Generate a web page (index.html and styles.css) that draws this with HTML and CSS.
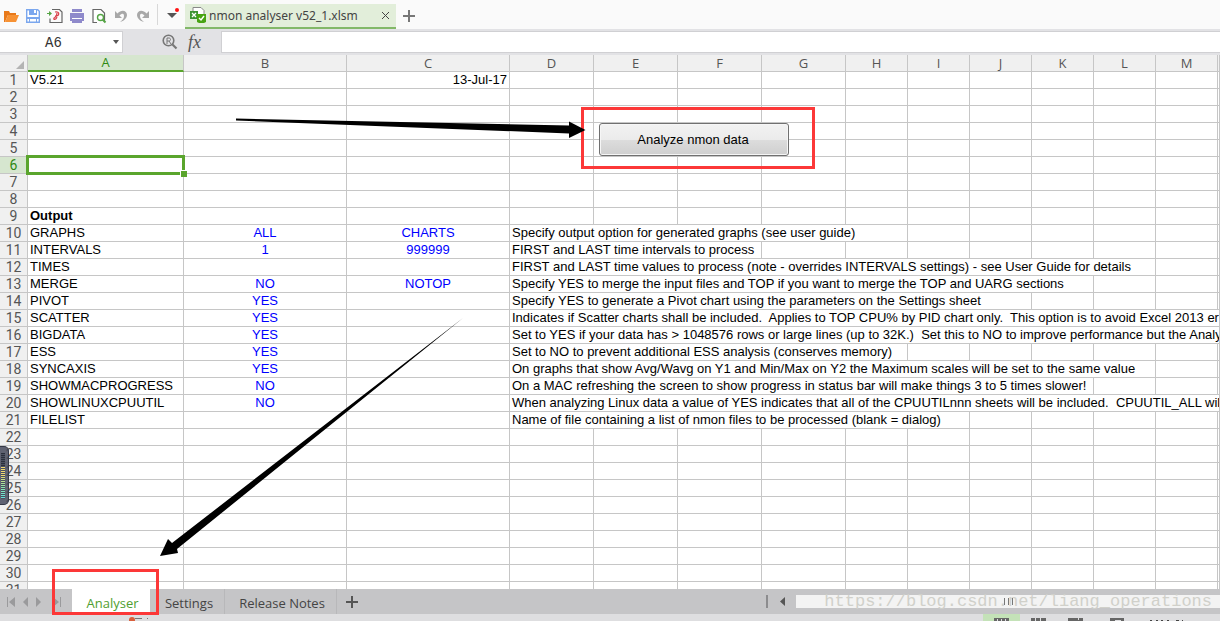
FILE: index.html
```
<!DOCTYPE html>
<html lang="en">
<head>
<meta charset="utf-8">
<title>nmon analyser v52_1.xlsm</title>
<link rel="stylesheet" href="styles.css">
</head>
<body>
<div class="app">
  <header class="toolbar">
    <div class="tools">
      <button class="tool" aria-label="Open"><svg width="16" height="16" viewBox="0 0 16 16"><path d="M1 14V3h5l1 2h6v2H5L2 14z" fill="#e8791a"/><path d="M5 7h11l-3 7H2z" fill="#f79234"/></svg></button>
      <button class="tool" aria-label="Save"><svg width="16" height="16" viewBox="0 0 16 16"><path d="M1.700 1.700h11l1.600 1.600v11H1.700z" fill="#fff" stroke="#7ba7ee" stroke-width="1.400"/><path d="M4 1h8v6H4zM2 9h12v2H2zM4 10h1v4H4zM11 10h1v4h-1z" fill="#7ba7ee"/><path d="M9 2h2v3H9z" fill="#fff"/></svg></button>
      <button class="tool" aria-label="Export to PDF"><svg width="16" height="16" viewBox="0 0 16 16"><path d="M5 1.500h7.500l2.500 2.500v10.500H3v-4" fill="none" stroke="#666" stroke-width="1.200"/><path d="M0 5h2V3l3 2.500L2 8V6H0z" fill="#55a545"/><path d="M8 4c5-1 5 4 0 4M10 5c0 4-2 4-3 5-1 2 2 2 3-1" fill="none" stroke="#d9404a" stroke-width="1.200"/></svg></button>
      <button class="tool" aria-label="Print"><svg width="16" height="16" viewBox="0 0 16 16"><path d="M3 1h10v3H3zM1 5h14v8H1zM3 12h10v3H3z" fill="#8f8acb"/><path d="M3 10h10v1H3z" fill="#fff"/></svg></button>
      <button class="tool" aria-label="Print preview"><svg width="16" height="16" viewBox="0 0 16 16"><path d="M6 14.500H2v-13h8l3.500 3.500V14" fill="#fff" stroke="#666" stroke-width="1.200"/><circle cx="9.500" cy="9.500" r="3" fill="#fff" stroke="#55a545" stroke-width="1.400"/><path d="m11.500 11.500 3 3" stroke="#55a545" stroke-width="2"/></svg></button>
      <button class="tool" aria-label="Undo"><svg width="16" height="16" viewBox="0 0 16 16"><path d="M2 3v7h7L6.500 7.500C9 5 11 5 11 8c0 3-2 4-4 6 4-1 7-4 7-7 0-5-6-6-9.500-1.500z" fill="#a8a8a8"/></svg></button>
      <button class="tool" aria-label="Redo"><svg width="16" height="16" viewBox="0 0 16 16"><path d="M14 3v7H7l2.500-2.500C7 5 5 5 5 8c0 3 2 4 4 6-4-1-7-4-7-7 0-5 6-6 9.500-1.500z" fill="#a8a8a8"/></svg></button>
    </div>
    <button class="more" aria-label="More commands"><svg width="14" height="16" viewBox="0 0 14 16"><path d="M1 6h10l-5 5z" fill="#555"/><circle cx="11" cy="3" r="2" fill="#f11"/></svg></button>
    <div class="doc-tab">
      <svg width="16" height="17" viewBox="0 0 16 17"><path d="M3 .5h8l3 3v8H3z" fill="#fff" stroke="#888"/><path d="M0 4h8v8H0z" fill="#3d9433"/><path d="m2 6 4 4m0-4-4 4" stroke="#fff" stroke-width="1.300"/><path d="M7 7h9v8l-2 1H9l-2-1z" fill="#47a412"/><path d="m9 11 2 2 3-4" fill="none" stroke="#fff" stroke-width="1.400"/></svg>
      <span class="doc-name">nmon analyser v52_1.xlsm</span>
      <button class="close" aria-label="Close"><svg width="9" height="9" viewBox="0 0 9 9"><path d="m1 1 7 7m0-7-7 7" stroke="#444"/></svg></button>
    </div>
    <button class="new-doc" aria-label="New document"><svg width="12" height="12" viewBox="0 0 12 12"><path d="M0 6h12M6 0v12" stroke="#777" stroke-width="2"/></svg></button>
  </header>

  <div class="formula-bar">
    <div class="name-box"><input class="cell-name" aria-label="Cell name" value="A6"><svg width="6" height="4" viewBox="0 0 6 4"><path d="M0 0h6L3 4z" fill="#555"/></svg></div>
    <div class="formula-tools">
      <svg width="16" height="16" viewBox="0 0 16 16"><circle cx="6.500" cy="6.500" r="5.300" fill="none" stroke="#777" stroke-width="1.600"/><path d="m10.500 10.500 4 4" stroke="#777" stroke-width="2.200"/><path d="M5 10V4h2c2 0 2 3 0 3H5m2 0 2 3" fill="none" stroke="#777"/></svg>
      <span class="fx">fx</span>
    </div>
    <input class="formula" aria-label="Formula">
  </div>

  <main class="sheet">
    <table class="grid">
      <colgroup><col class="c-num"><col class="c-a"><col class="c-b"><col class="c-b"><col class="c-d"><col class="c-d"><col class="c-d"><col class="c-d"><col class="c-h"><col class="c-h"><col class="c-h"><col class="c-h"><col class="c-h"><col class="c-h"><col></colgroup>
      <thead><tr><th class="corner"><svg width="10" height="10" viewBox="0 0 10 10"><path d="M9 1v8H1z" fill="#b4b4b4"/></svg></th><th class="active">A</th><th>B</th><th>C</th><th>D</th><th>E</th><th>F</th><th>G</th><th>H</th><th>I</th><th>J</th><th>K</th><th>L</th><th>M</th><th></th></tr></thead>
      <tbody id="rows"></tbody>
    </table>
    <div class="selection"></div>
    <button class="analyze">Analyze nmon data</button>
    <div class="frame frame-button"></div>
  </main>

  <footer class="tabs">
    <div class="nav">
      <button aria-label="First sheet"><svg width="8" height="10" viewBox="0 0 8 10"><path d="M0 0h1v10H0zM8 0v10L2 5z" fill="#9a9a9c"/></svg></button>
      <button aria-label="Previous sheet"><svg width="5" height="10" viewBox="0 0 5 10"><path d="M5 0v10L0 5z" fill="#9a9a9c"/></svg></button>
      <button aria-label="Next sheet"><svg width="5" height="10" viewBox="0 0 5 10"><path d="M0 0v10l5-5z" fill="#9a9a9c"/></svg></button>
      <button class="last" aria-label="Last sheet"><svg width="8" height="10" viewBox="0 0 8 10"><path d="M7 0h1v10H7zM0 0v10l6-5z" fill="#9a9a9c"/></svg></button>
    </div>
    <button class="tab current">Analyser</button>
    <button class="tab settings">Settings</button>
    <button class="tab notes">Release Notes</button>
    <button class="add" aria-label="Add sheet"><svg width="12" height="12" viewBox="0 0 12 12"><path d="M0 6h12M6 0v12" stroke="#555" stroke-width="2"/></svg></button>
    <div class="scroll">
      <span class="grip"></span>
      <svg width="5" height="9" viewBox="0 0 5 9"><path d="M5 0v9L0 4.500z" fill="#555"/></svg>
      <div class="track"><span class="watermark">https://blog.csdn.net/liang_operations</span><span class="thumb"></span></div>
    </div>
  </footer>
  <div class="status">
    <svg width="24" height="7" viewBox="0 0 24 7"><circle cx="5" cy="6" r="3" fill="#d9603c"/><path d="M8 4h7v1H8zM20 4h1v1h-1z" fill="#777"/></svg>
    <svg width="237" height="7" viewBox="0 0 237 7"><path d="M0 0h37v7H0z" fill="#c4e2b8"/><path d="M11 4h15v3H11zM48 4h4v3h-4zM53 4h4v3h-4zM58 4h5v3h-5zM85 4h15v3H85zM127 4h14v3h-14z" fill="#666"/><path d="M14 5h1v2h-1zM18 5h1v2h-1zM22 5h1v2h-1zM95 4h1v2h-1zM132 6h6v1h-6z" fill="#dedee0"/><path d="M167 6h2v1h-2zM173 6h2v1h-2zM178 6h2v1h-2zM184 6h2v1h-2zM193 6h3v1h-3zM199 6h1v1h-1z" fill="#444"/></svg>
  </div>

  <svg class="annotations" width="600" height="570" viewBox="0 0 600 570" aria-hidden="true">
    <path d="M236 118.500 569 125.500V121.500L585.500 130 569 138V133.500L236 120.500z"/>
    <path d="M463 318 177 549 178 553 160 556 168 539 172 543z"/>
  </svg>
  <div class="frame frame-tab"></div>
  <div class="widget"><span class="meter"></span></div>
</div>
<script src="grid.js"></script>
</body>
</html>
```
FILE: grid.js
```
const data = {
  1: ["V5.21", "", "13-Jul-17"],
  9: ["Output"],
  10: ["GRAPHS", "ALL", "CHARTS", "Specify output option for generated graphs (see user guide)", 5],
  11: ["INTERVALS", "1", "999999", "FIRST and LAST time intervals to process", 3],
  12: ["TIMES", "", "", "FIRST and LAST time values to process (note - overrides INTERVALS settings) - see User Guide for details", 9],
  13: ["MERGE", "NO", "NOTOP", "Specify YES to merge the input files and TOP if you want to merge the TOP and UARG sections", 8],
  14: ["PIVOT", "YES", "", "Specify YES to generate a Pivot chart using the parameters on the Settings sheet", 7],
  15: ["SCATTER", "YES", "", "Indicates if Scatter charts shall be included.  Applies to TOP CPU% by PID chart only.  This option is to avoid Excel 2013 errors", 11],
  16: ["BIGDATA", "YES", "", "Set to YES if your data has > 1048576 rows or large lines (up to 32K.)  Set this to NO to improve performance but the Analyser", 11],
  17: ["ESS", "YES", "", "Set to NO to prevent additional ESS analysis (conserves memory)", 5],
  18: ["SYNCAXIS", "YES", "", "On graphs that show Avg/Wavg on Y1 and Min/Max on Y2 the Maximum scales will be set to the same value", 9],
  19: ["SHOWMACPROGRESS", "NO", "", "On a MAC refreshing the screen to show progress in status bar will make things 3 to 5 times slower!", 8],
  20: ["SHOWLINUXCPUUTIL", "NO", "", "When analyzing Linux data a value of YES indicates that all of the CPUUTILnnn sheets will be included.  CPUUTIL_ALL will", 11],
  21: ["FILELIST", "", "", "Name of file containing a list of nmon files to be processed (blank = dialog)", 6]
};
const body = document.getElementById("rows");
for (let n = 1; n <= 31; n++) {
  const tr = body.insertRow();
  const head = document.createElement("th");
  head.textContent = n;
  if (n === 6) head.className = "active";
  tr.append(head);
  const [a = "", b = "", c = "", d = "", span = 1] = data[n] || [];
  [a, b, c, d].forEach((text, i) => {
    const td = tr.insertCell();
    td.textContent = text;
    if (i === 0 && n === 9) td.className = "bold";
    if (i === 1 || i === 2) td.className = n === 1 ? "date" : "value";
    if (i === 3) td.colSpan = span;
  });
  for (let k = span; k < 11; k++) tr.insertCell();
}
```
FILE: styles.css
```
* { box-sizing: border-box; }
body { margin: 0; font-family: "Liberation Sans", Arial, sans-serif; font-size: 13px; color: #000; overflow: hidden; }
button { border: 0; padding: 0; background: none; font: inherit; color: inherit; }
input { border: 0; outline: 0; padding: 0; background: none; min-width: 0; }
svg { display: block; flex: none; }
.app { position: relative; display: flex; flex-direction: column; height: 100vh; overflow: hidden; }

.toolbar { display: flex; align-items: center; height: 29px; flex: none; background: #fafafa; }
.tools { display: flex; gap: 6px; padding: 2px 6px 0 3px; border-right: 1px solid #d8d8d8; height: 21px; align-items: center; }
.more { padding-left: 8px; width: 27px; }
.doc-tab { display: flex; align-items: center; align-self: flex-end; gap: 3px; width: 211px; height: 25px; padding: 0 6px 0 5px; background: #e2eeda; border-bottom: 2px solid #82b868; }
.doc-name { flex: 1; font: 12px/20px "Noto Sans", "Open Sans", sans-serif; color: #444; white-space: nowrap; }
.new-doc { padding: 2px 7px 0; }

.formula-bar { display: flex; height: 26px; flex: none; padding: 2px 0; background: #e2e2e5; }
.name-box { display: flex; align-items: center; width: 123px; padding-right: 3px; background: #fff; border: 1px solid #d0d0d3; border-left: 0; }
.cell-name { flex: 1; width: 80px; padding: 2px 6px 0 0; font: 14px "Liberation Mono", monospace; text-align: center; color: #333; }
.formula-tools { display: flex; align-items: center; gap: 10px; width: 98px; padding-left: 39px; }
.fx { font: italic 18px/20px "Liberation Serif", serif; color: #555; }
.formula { flex: 1; background: #fff; border: 1px solid #d0d0d3; border-right: 0; }

.sheet { position: relative; flex: 1; min-height: 0; overflow: hidden; background: #fff; }
.grid { width: 100%; table-layout: fixed; border-spacing: 0; }
.c-num { width: 28px; }
.c-a { width: 156px; }
.c-b { width: 163px; }
.c-d { width: 84px; }
.c-h { width: 62px; }
.grid tr { height: 17px; }
.grid th, .grid td { height: 17px; padding: 0; border: solid #c6c6c6; border-width: 0 1px 1px 0; line-height: 16px; white-space: pre; overflow: hidden; }
.grid th { background: #f0f0f0; font: 14px/16px Roboto, sans-serif; color: #555; }
.grid thead th { font: 13px/16px "Open Sans", sans-serif; }
.grid thead th.active { background: #d6e6cf; color: #2f8a12; border-bottom: 2px solid #5aa52d; line-height: 15px; overflow: visible; }
.grid tbody th.active { background: #d6e6cf; color: #2f8a12; }
.grid td { padding: 0 2px; }
.grid td.value { text-align: center; color: #00f; }
.grid td.date { text-align: right; }
.grid td.bold { font-weight: bold; }
.corner svg { margin: 3px 2px 0 auto; }

.selection { position: absolute; left: 26px; top: 100px; width: 159px; height: 20px; border: 3px solid #5aa52d; }
.selection::after { content: ""; position: absolute; right: -5px; bottom: -5px; width: 6px; height: 6px; background: #5aa52d; border: solid #fff; border-width: 1px 0 0 1px; }
.analyze { position: absolute; left: 599px; top: 68px; width: 190px; height: 33px; padding-right: 2px; border: 1px solid #707070; border-radius: 3px; background: linear-gradient(#f2f2f2, #ebebeb 50%, #dddddd 50%, #cfcfcf); box-shadow: inset 0 0 0 1px #f6f6f6; }
.frame { position: absolute; border: 3px solid #fc3838; }
.frame-button { left: 581px; top: 52px; width: 234px; height: 62px; }
.frame-tab { left: 52px; bottom: 6px; width: 107px; height: 46px; }

.tabs { display: flex; align-items: stretch; height: 25px; flex: none; background: #c5c5c7; font: 13px/25px "Open Sans", "Noto Sans", sans-serif; color: #444; }
.nav { display: flex; align-items: center; gap: 8px; width: 72px; padding-left: 7px; }
.last { padding-left: 4px; }
.tab { border-right: 1px solid #b8b8ba; padding-top: 2px; white-space: nowrap; }
.current { width: 78px; background: #fff; color: #4f9e30; border: 0; padding-left: 3px; }
.settings { width: 75px; padding-left: 4px; }
.notes { width: 112px; padding-left: 3px; }
.add { padding: 0 9px; }
.scroll { display: flex; align-items: center; flex: 1; justify-content: flex-end; }
.grip { width: 2px; height: 13px; margin-right: 12px; background: #8c8c8e; }
.track { position: relative; width: 424px; height: 13px; margin-left: 11px; background: #f3f3f3; }
.thumb { position: absolute; left: 208px; top: 3px; width: 9px; height: 7px; background: repeating-linear-gradient(90deg, #777 0 1px, transparent 1px 4px); }
.watermark { position: absolute; right: 8px; top: -3px; font: 17px/20px "Liberation Mono", monospace; color: #d0d0ca; white-space: nowrap; }
.status { display: flex; justify-content: space-between; height: 7px; flex: none; padding-left: 127px; background: #dedee0; overflow: hidden; }

.annotations { position: absolute; left: 0; top: 0; pointer-events: none; }
.widget { position: absolute; left: 0; top: 446px; width: 9px; height: 59px; padding: 6px 0 0 1px; border: solid #343846; border-width: 1px 1px 1px 0; border-radius: 0 5px 5px 0; background: rgba(70, 74, 92, 0.85); }
.meter { display: block; width: 4px; height: 46px; background: repeating-linear-gradient(transparent 0 1px, #4b5060 1px 2px), linear-gradient(#2c303c 0 14px, #f0d870 14px 22px, #8fe4aa 34px, #60e0e0); }
```
